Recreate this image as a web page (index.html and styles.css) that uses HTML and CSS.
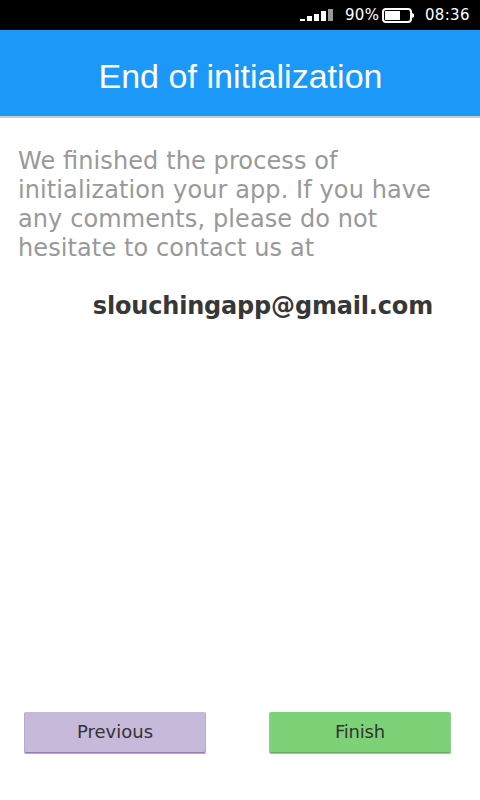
FILE: index.html
```html
<!DOCTYPE html>
<html lang="en">
<head>
<meta charset="utf-8">
<title>End of initialization</title>
<link rel="stylesheet" href="styles.css">
</head>
<body>
<div class="status">
  <svg class="signal" width="33" height="12" viewBox="0 0 33 12" shape-rendering="crispEdges"><path fill="#fff" d="M0 10h5v2H0zM7 7h5v5H7zM14 5h5v7h-5zM21 2h5v10h-5z"/><path fill="#999" d="M28 0h5v12h-5z"/></svg>
  <span class="percent">90%</span>
  <svg class="battery" width="32" height="15" viewBox="0 0 32 15"><rect x="1" y="1" width="28" height="13" rx="3" fill="none" stroke="#fff" stroke-width="2"/><path fill="#fff" d="M3 3h15v9H3zM30 5l2 1v3l-2 1z"/></svg>
  <span class="time">08:36</span>
</div>
<header class="header"><h1>End of initialization</h1></header>
<main class="content">
  <p class="message">We finished the process of initialization your app. If you have any comments, please do not hesitate to contact us at</p>
  <p class="email">slouchingapp@gmail.com</p>
</main>
<footer class="actions">
  <button class="button previous">Previous</button>
  <button class="button finish">Finish</button>
</footer>
</body>
</html>
```
FILE: styles.css
```css
* { box-sizing: border-box; }
body { margin: 0; height: 800px; display: flex; flex-direction: column; background: #fff; font-family: "DejaVu Sans", sans-serif; overflow: hidden; }
.status { height: 30px; flex: none; display: grid; grid-template-columns: 45px 37px 43px 55px; align-items: center; padding-left: 300px; background: #000; color: #fff; font-size: 15px; letter-spacing: .3px; }
.percent, .time { line-height: 18px; }
.battery { margin-top: 1px; }
.header { height: 88px; flex: none; display: flex; align-items: center; justify-content: center; padding-top: 6px; background: #1c99f8; border-bottom: 2px solid #ccc; color: #fff; }
h1 { margin: 0 0 0 1px; font: 34px "Liberation Sans", sans-serif; letter-spacing: .03px; }
.content { flex: 1; padding: 29px 18px 0; }
.message { margin: 0; font-size: 24px; line-height: 29px; letter-spacing: .1px; font-feature-settings: "liga" 1; color: #999; }
.email { margin: 29px 29px 0 0; text-align: right; font-size: 24px; line-height: 29px; font-weight: bold; letter-spacing: -.18px; color: #373737; }
.actions { display: flex; justify-content: space-between; padding: 0 29px 46px 24px; }
.button { width: 182px; height: 42px; padding: 0 0 2px; border: 1px solid; border-top: 0; border-radius: 2px; font: 18px "DejaVu Sans", sans-serif; color: #333; }
.previous { background: #c7b9d9; border-color: #b9a8cf; box-shadow: inset 0 -1px #977bb9; }
.finish { background: #7dd277; border-color: #92cf8e; box-shadow: inset 0 -1px #66b062; letter-spacing: -.2px; }
```
